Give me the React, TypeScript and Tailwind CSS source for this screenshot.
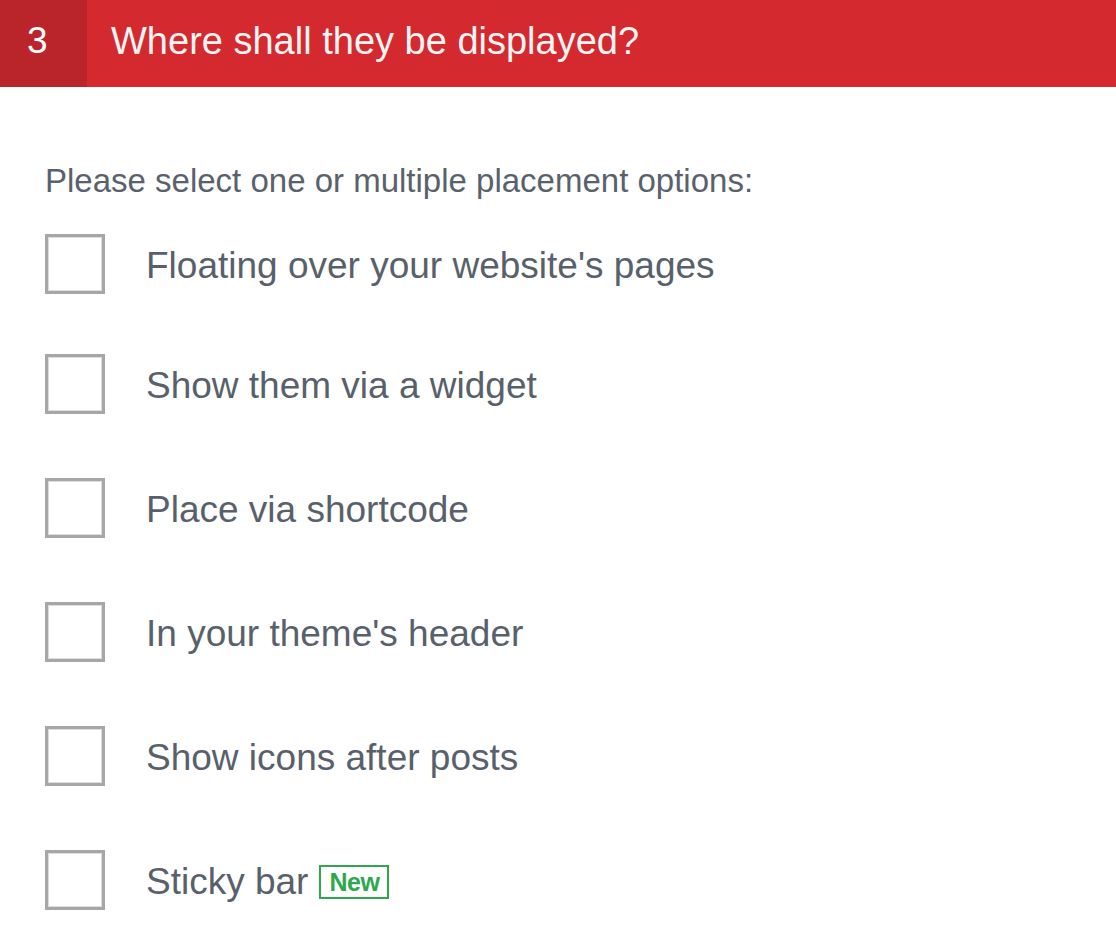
import React from "react";

const options = [
  "Floating over your website's pages",
  "Show them via a widget",
  "Place via shortcode",
  "In your theme's header",
  "Show icons after posts",
  "Sticky bar",
];

export default function App() {
  return (
    <div className="w-[1116px] h-[943px] bg-white overflow-hidden" style={{ fontFamily: '"Liberation Sans", Arial, sans-serif' }}>
      <div className="flex h-[87px] bg-[#d3292f] text-white">
        <div className="w-[87px] h-full bg-[#b9252b] flex items-center pl-[27px] pb-[6px] text-[37px] leading-none">3</div>
        <div className="flex items-center pl-[24px] pb-[6px] text-[38px] leading-none text-[#f4f4f4]">Where shall they be displayed?</div>
      </div>
      <div className="pl-[45px] pt-[78px]">
        <div className="text-[33px] leading-[32px] text-[#59626c]">Please select one or multiple placement options:</div>
        <div className="mt-[37px] flex flex-col gap-[64px]">
          {options.map((o, i) => (
            <div key={i} className={`flex items-center h-[60px] ${i === 0 ? "mb-[-4px]" : ""}`}>
              <div className="w-[60px] h-[60px] border-[3px] border-[#a7a7a7] bg-white shrink-0">
                <div className="w-full h-full border border-[#dcdcdc]" />
              </div>
              <div className="ml-[41px] pt-[2px] flex items-center text-[37px] leading-[37px] text-[#58616b]">
                <span>{o}</span>
                {i === 5 && (
                  <span className="ml-[11px] mt-[2px] h-[34px] px-[8px] border-[2px] border-[#2da84c] text-[#2da84c] font-bold text-[25px] leading-none flex items-center" style={{ letterSpacing: "-0.5px" }}>New</span>
                )}
              </div>
            </div>
          ))}
        </div>
      </div>
    </div>
  );
}
